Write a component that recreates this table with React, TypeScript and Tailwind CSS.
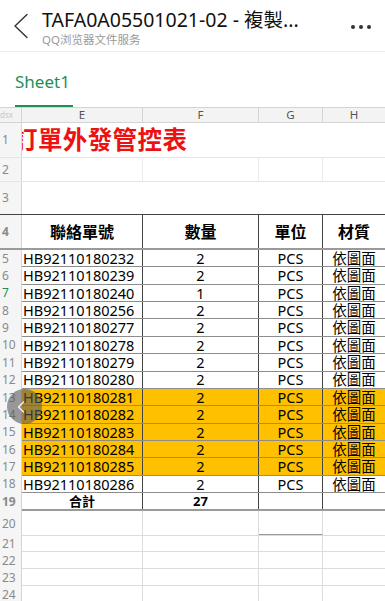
const font = { fontFamily: '"Noto Sans", "Noto Sans CJK TC", sans-serif' }

const items = [
  { n: 5, code: 'HB92110180232', qty: '2' },
  { n: 6, code: 'HB92110180239', qty: '2' },
  { n: 7, code: 'HB92110180240', qty: '1', active: true },
  { n: 8, code: 'HB92110180256', qty: '2' },
  { n: 9, code: 'HB92110180277', qty: '2' },
  { n: 10, code: 'HB92110180278', qty: '2' },
  { n: 11, code: 'HB92110180279', qty: '2' },
  { n: 12, code: 'HB92110180280', qty: '2' },
  { n: 13, code: 'HB92110180281', qty: '2', hl: true },
  { n: 14, code: 'HB92110180282', qty: '2', hl: true },
  { n: 15, code: 'HB92110180283', qty: '2', hl: true },
  { n: 16, code: 'HB92110180284', qty: '2', hl: true },
  { n: 17, code: 'HB92110180285', qty: '2', hl: true },
  { n: 18, code: 'HB92110180286', qty: '2' },
]

function RowNum({ n, active }: { n: number; active?: boolean }) {
  return (
    <div
      className={`w-[22px] shrink-0 bg-[#f5f5f5] border-r border-[#d6d6d6] flex items-center pl-[2px] text-[12px] leading-none ${
        active ? 'text-[#1f8f55]' : 'text-[#8a8a8a]'
      }`}
    >
      {n}
    </div>
  )
}

export default function App() {
  return (
    <div className="relative w-[385px] h-[601px] overflow-hidden bg-white text-black" style={font}>
      {/* Top bar */}
      <header className="flex items-center h-[52px] border-b border-[#ececec]">
        <div className="w-[42px] flex justify-center">
          <svg width="18" height="26" viewBox="0 0 18 26" fill="none" className="ml-[-1px]">
            <path d="M15 1.5 3 13l12 11.5" stroke="#333" strokeWidth="1.4" strokeLinecap="round" strokeLinejoin="round" />
          </svg>
        </div>
        <div className="flex flex-col flex-1 min-w-0 pt-[3px]">
          <span className="text-[19.5px] leading-[24px] text-[#111] whitespace-nowrap">
            TAFA0A05501021-02 - 複製...
          </span>
          <span className="text-[11.5px] leading-[15px] text-[#9a9a9a] whitespace-nowrap">QQ浏览器文件服务</span>
        </div>
        <div className="flex gap-[4px] pr-[14px] pt-[2px]">
          <span className="w-[4px] h-[4px] rounded-full bg-[#333]" />
          <span className="w-[4px] h-[4px] rounded-full bg-[#333]" />
          <span className="w-[4px] h-[4px] rounded-full bg-[#333]" />
        </div>
      </header>

      {/* Sheet tab */}
      <div className="h-[55px] flex items-end pl-[15px]">
        <div className="flex flex-col items-start">
          <span className="text-[17px] leading-[22px] text-[#1f8f55] pb-[12px]">Sheet1</span>
          <span className="w-[58px] h-[2px] bg-[#1f8f55]" />
        </div>
      </div>

      {/* Column header */}
      <div className="flex h-[16px] bg-[#f3f3f3] border-y border-[#d4d4d4] text-[11.5px] text-[#555] leading-none">
        <div className="w-[22px] border-r border-[#d4d4d4] flex items-center text-[8px] text-[#c8c8c8] overflow-hidden">
          dsx
        </div>
        <div className="w-[121px] border-r border-[#d4d4d4] flex items-center justify-center">E</div>
        <div className="w-[116px] border-r border-[#d4d4d4] flex items-center justify-center">F</div>
        <div className="w-[64px] border-r border-[#d4d4d4] flex items-center justify-center">G</div>
        <div className="flex-1 flex items-center justify-center">H</div>
      </div>

      {/* Row 1 - title */}
      <div className="flex h-[35px] border-b border-[#e4e4e4]">
        <RowNum n={1} />
        <div className="flex-1 overflow-hidden flex items-center">
          <span className="ml-[-9px] text-[24.5px] leading-none font-bold text-[#ee1111] tracking-[0.4px] whitespace-nowrap">
            訂單外發管控表
          </span>
        </div>
      </div>

      {/* Row 2 */}
      <div className="flex h-[24px] border-b border-[#e4e4e4]">
        <RowNum n={2} />
        <div className="w-[121px] border-r border-[#ececec]" />
        <div className="w-[116px] border-r border-[#ececec]" />
        <div className="w-[64px] border-r border-[#ececec]" />
        <div className="flex-1" />
      </div>

      {/* Row 3 */}
      <div className="flex h-[33px] border-b border-[#444]">
        <RowNum n={3} />
        <div className="flex-1" />
      </div>

      {/* Row 4 - headers */}
      <div className="flex h-[35px] border-b-2 border-[#9a9a9a] text-[16px] font-bold leading-none">
        <RowNum n={4} />
        <div className="w-[121px] border-r border-[#444] flex items-center justify-center">聯絡單號</div>
        <div className="w-[116px] border-r border-[#444] flex items-center justify-center">數量</div>
        <div className="w-[64px] border-r border-[#444] flex items-center justify-center">單位</div>
        <div className="flex-1 flex items-center justify-center">材質</div>
      </div>

      {/* Data rows */}
      {items.map((it) => (
        <div key={it.n} className="flex h-[17.36px] text-[14.5px] leading-none">
          <RowNum n={it.n} active={it.active} />
          <div className={`flex flex-1 border-b-[1.5px] border-[#8c8c8c] ${it.hl ? 'bg-[#ffc000]' : ''}`}>
            <div className="w-[121px] border-r border-[#444] flex items-center pl-[1px] whitespace-nowrap">
              {it.code}
            </div>
            <div className="w-[116px] border-r border-[#444] flex items-center justify-center">{it.qty}</div>
            <div className="w-[64px] border-r border-[#444] flex items-center justify-center">PCS</div>
            <div className="flex-1 flex items-center justify-center">依圖面</div>
          </div>
        </div>
      ))}

      {/* Row 19 - total */}
      <div className="flex h-[18px] text-[13px] font-bold leading-none">
        <RowNum n={19} />
        <div className="flex flex-1 border-b-2 border-[#9a9a9a]">
          <div className="w-[121px] border-r border-[#444] flex items-center justify-center">合計</div>
          <div className="w-[116px] border-r border-[#444] flex items-center justify-center">27</div>
          <div className="w-[64px] border-r border-[#444]" />
          <div className="flex-1" />
        </div>
      </div>

      {/* Empty rows */}
      {[
        { n: 20, h: 'h-[25px]' },
        { n: 21, h: 'h-[16px]' },
        { n: 22, h: 'h-[17px]' },
        { n: 23, h: 'h-[17px]' },
        { n: 24, h: 'h-[17px]' },
      ].map((r) => (
        <div key={r.n} className={`flex ${r.h}`}>
          <RowNum n={r.n} />
          <div className="flex flex-1 border-b border-[#dcdcdc]">
            <div className="w-[121px] border-r border-[#dcdcdc]" />
            <div className="w-[116px] border-r border-[#dcdcdc]" />
            <div className={`w-[64px] border-r border-[#dcdcdc] ${r.n === 20 ? 'border-b border-b-[#9a9a9a]' : ''}`} />
            <div className="flex-1" />
          </div>
        </div>
      ))}

      {/* Floating back button */}
      <div className="absolute left-[7px] top-[389px] w-[35px] h-[35px] rounded-full bg-[#5a5a5a]/60 flex items-center justify-center">
        <svg width="8" height="12" viewBox="0 0 8 12" fill="none" className="-ml-[8px]">
          <path d="M6.5 1 1.5 6l5 5" stroke="white" strokeOpacity="0.9" strokeWidth="1.3" strokeLinecap="round" strokeLinejoin="round" />
        </svg>
      </div>
    </div>
  )
}
